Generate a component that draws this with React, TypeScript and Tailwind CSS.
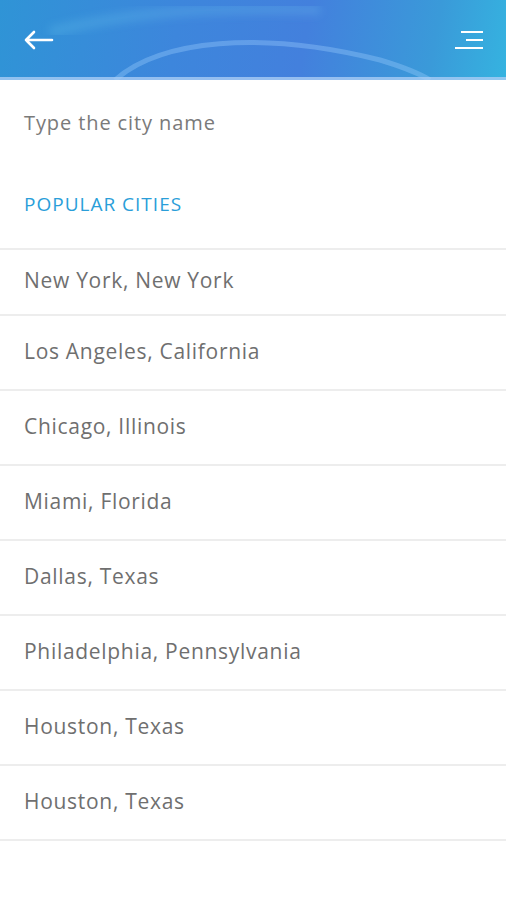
import React from "react";

const cities = [
  "New York, New York",
  "Los Angeles, California",
  "Chicago, Illinois",
  "Miami, Florida",
  "Dallas, Texas",
  "Philadelphia, Pennsylvania",
  "Houston, Texas",
  "Houston, Texas",
];

export default function App() {
  return (
    <div className="w-[506px] h-[900px] bg-white overflow-hidden" style={{ fontFamily: '"Open Sans", "Noto Sans", sans-serif' }}>
      <header className="relative h-[80px] bg-[linear-gradient(100deg,#2f94d6_0%,#3d86dc_35%,#4380dd_60%,#3a9ad9_85%,#35b3e0_100%)] overflow-hidden flex items-center justify-between px-[24px]">
        <svg className="absolute inset-0 pointer-events-none" width="506" height="80" viewBox="0 0 506 80">
          <defs>
            <filter id="blur1"><feGaussianBlur stdDeviation="4" /></filter>
          </defs>
          <path d="M115 80 C 160 40, 260 30, 380 60 C 400 66, 420 74, 430 80" stroke="rgba(160,210,255,0.35)" strokeWidth="5" fill="none" />
          <path d="M50 32 C 120 14, 200 6, 320 10" stroke="rgba(120,210,240,0.22)" strokeWidth="10" fill="none" filter="url(#blur1)" />
          <rect x="0" y="77" width="506" height="3" fill="rgba(170,205,245,0.8)" />
        </svg>
        <svg className="relative" width="30" height="20" viewBox="0 0 30 20" fill="none">
          <path d="M2 10 H28 M10 2 L2 10 L10 18" stroke="white" strokeWidth="2.6" strokeLinecap="round" strokeLinejoin="round" />
        </svg>
        <svg className="relative mr-[-2px]" width="30" height="20" viewBox="0 0 30 20" fill="none">
          <path d="M7 2 H29 M12 10 H29 M1 18 H29" stroke="white" strokeWidth="1.8" />
        </svg>
      </header>
      <div className="pl-[24px] pt-[30px] h-[168px] flex flex-col">
        <div className="text-[20px] text-[#7a7a7a] leading-[26px] tracking-[0.9px]">Type the city name</div>
        <div className="mt-[55px] text-[19px] text-[#2a9ed9] font-medium leading-[26px] tracking-[1px]">POPULAR CITIES</div>
      </div>
      <div className="border-t-2 border-[#ededed]">
        {cities.map((c, i) => (
          <div
            key={i}
            className={`${i === 0 ? "h-[66px] pb-[3px]" : "h-[75px] pb-[2px]"} border-b-2 border-[#ededed] flex items-center pl-[24px] text-[21px] text-[#6f6f6f] tracking-[0.7px]`}
          >
            {c}
          </div>
        ))}
      </div>
    </div>
  );
}
